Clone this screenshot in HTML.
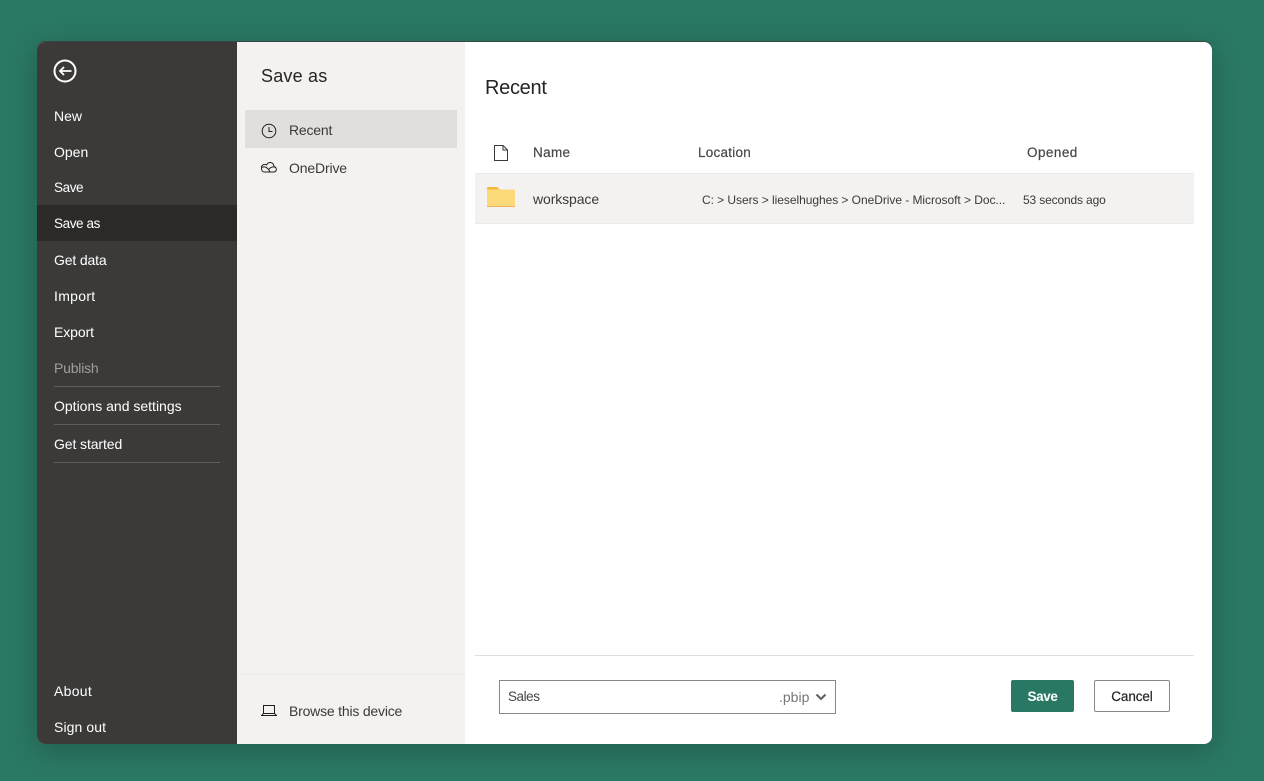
<!DOCTYPE html>
<html><head><meta charset="utf-8">
<style>
html,body{margin:0;padding:0;width:1264px;height:781px;overflow:hidden;background:#2a7964;font-family:"Liberation Sans",sans-serif;}
#d{position:absolute;left:37px;top:42px;width:1175px;height:702px;border-radius:8px;overflow:hidden;background:#fff;box-shadow:0 6px 30px rgba(0,0,0,.24),0 -1px 0 #3f4a48;}
.a{position:absolute;white-space:nowrap;line-height:20px;}
.m{left:54px;color:#fff;font-size:14px;}
.h{font-size:13px;color:#484644;-webkit-text-stroke:.2px #484644;}
.r{position:absolute;}
</style></head><body>
<div id="d"></div>
<div class="r" style="left:37px;top:42px;width:200px;height:702px;background:#3b3a39;border-radius:8px 0 0 8px"></div>
<div class="r" style="left:237px;top:42px;width:228px;height:702px;background:#f3f2f1"></div>
<div class="r" style="left:37px;top:205px;width:200px;height:36px;background:#2b2a29"></div>
<svg class="r" style="left:53px;top:59px" width="24" height="24" viewBox="0 0 24 24" fill="none" stroke="#fff"><circle cx="12" cy="12" r="10.500" stroke-width="2"/><path d="M18.500 12H7M11 8 7 12l4 4" stroke-width="1.800"/></svg>
<div class="a m" style="top:106px">New</div>
<div class="a m" style="top:142px">Open</div>
<div class="a m" style="top:178px;font-size:13.500px;letter-spacing:-.4px">Save</div>
<div class="a m" style="top:214px;font-size:13.500px;letter-spacing:-.4px">Save as</div>
<div class="a m" style="top:250px;letter-spacing:-.15px">Get data</div>
<div class="a m" style="top:286px;letter-spacing:.3px">Import</div>
<div class="a m" style="top:322px;letter-spacing:-.08px">Export</div>
<div class="a m" style="top:358px;color:#a19f9d;letter-spacing:-.2px">Publish</div>
<div class="r" style="left:54px;top:386px;width:166px;height:1px;background:#605e5c"></div>
<div class="a m" style="top:396px">Options and settings</div>
<div class="r" style="left:54px;top:424px;width:166px;height:1px;background:#605e5c"></div>
<div class="a m" style="top:434px;letter-spacing:-.1px">Get started</div>
<div class="r" style="left:54px;top:462px;width:166px;height:1px;background:#605e5c"></div>
<div class="a m" style="top:681px;letter-spacing:.3px">About</div>
<div class="a m" style="top:717px;letter-spacing:.1px">Sign out</div>

<div class="a" style="left:261px;top:66px;font-size:18px;color:#252423;letter-spacing:.2px">Save as</div>
<div class="r" style="left:245px;top:110px;width:212px;height:38px;background:#e1dfdd"></div>
<svg class="r" style="left:261px;top:123px" width="16" height="16" viewBox="0 0 16 16" fill="none" stroke="#201f1e"><circle cx="8" cy="8" r="6.800"/><path d="M8 4v4.500h3.500"/></svg>
<div class="a" style="left:289px;top:120px;font-size:14px;color:#3b3a39;letter-spacing:-.2px">Recent</div>
<svg class="r" style="left:261px;top:160px" width="16" height="14" viewBox="0 0 16 14" fill="none" stroke="#201f1e"><path d="M3 12H13a2.500 2.500 0 0 0 2.300-2.700A2.500 2.500 0 0 0 13 6.800 4 4 0 0 0 9.500 2.500 4 4 0 0 0 5.600 5 3.300 3.300 0 0 0 .6 8.800 3 3 0 0 0 3 12Z"/><path d="M1 7.500c3.500-2 6 .8 8 4.300M8 9c2-2 4.500-2.700 7-1.500"/></svg>
<div class="a" style="left:289px;top:158px;font-size:14px;color:#3b3a39;letter-spacing:-.15px">OneDrive</div>
<div class="r" style="left:237px;top:674px;width:228px;height:1px;background:#edebe9"></div>
<svg class="r" style="left:261px;top:704px" width="16" height="13" viewBox="0 0 16 13" fill="none" stroke="#201f1e"><path d="M2.500 9.500V1.500h11v8M.5 11.500h15l-2-2h-11z"/></svg>
<div class="a" style="left:289px;top:701px;font-size:14px;color:#3b3a39;letter-spacing:-.2px">Browse this device</div>

<div class="a" style="left:485px;top:78px;font-size:20px;color:#252423;letter-spacing:-.3px">Recent</div>
<svg class="r" style="left:493px;top:144px" width="16" height="18" viewBox="0 0 16 18" fill="none" stroke="#3b3a39"><path d="M1.500 1.500h8.500l4.500 4.500V16.500h-13zM10 1.500v4.500h4.500"/></svg>
<div class="a h" style="left:533px;top:143px;font-size:13.500px;letter-spacing:.35px">Name</div>
<div class="a h" style="left:698px;top:143px;font-size:13.500px;letter-spacing:.25px">Location</div>
<div class="a h" style="left:1027px;top:143px;font-size:13.500px;letter-spacing:.45px">Opened</div>
<div class="r" style="left:475px;top:173px;width:719px;height:51px;background:#f3f2f1;border-top:1px solid #edebe9;border-bottom:1px solid #edebe9;box-sizing:border-box"></div>
<svg class="r" style="left:487px;top:186px" width="28" height="22" viewBox="0 0 28 22"><path d="M0 2a1 1 0 0 1 1-1h8.500a2 2 0 0 1 1.400.6L13 4H0z" fill="#f5b93f"/><path d="M0 3.500h27a1 1 0 0 1 1 1V20a1 1 0 0 1-1 1H1a1 1 0 0 1-1-1z" fill="#fcd97a"/><rect y="20" width="28" height="1" rx=".5" fill="#f3b45a"/></svg>
<div class="a" style="left:533px;top:189px;font-size:14px;color:#3b3a39;letter-spacing:-.1px">workspace</div>
<div class="a" style="left:702px;top:190px;font-size:12px;color:#3b3a39;letter-spacing:-.05px">C: &gt; Users &gt; lieselhughes &gt; OneDrive - Microsoft &gt; Doc...</div>
<div class="a" style="left:1023px;top:190px;font-size:12px;color:#3b3a39;letter-spacing:-.15px">53 seconds ago</div>

<div class="r" style="left:475px;top:655px;width:719px;height:1px;background:#e1dfdd"></div>
<div class="r" style="left:499px;top:680px;width:337px;height:34px;box-sizing:border-box;border:1px solid #8a8886;background:#fff"></div>
<div class="a" style="left:508px;top:687px;font-size:13.500px;color:#484644;letter-spacing:-.45px">Sales</div>
<div class="a" style="left:779px;top:687px;font-size:14px;color:#797775">.pbip</div>
<svg class="r" style="left:815px;top:693px" width="12" height="8" viewBox="0 0 12 8" fill="none" stroke="#605e5c" stroke-width="2"><path d="M1.500 1.500 6 6 10.500 1.500"/></svg>
<div class="a" style="left:1011px;top:680px;width:63px;height:32px;line-height:34px;background:#297864;border-radius:2px;color:#fff;font-size:13.500px;font-weight:bold;text-align:center;letter-spacing:-.4px">Save</div>
<div class="a" style="left:1094px;top:680px;width:76px;height:32px;box-sizing:border-box;border:1px solid #8a8886;line-height:32px;background:#fff;border-radius:2px;color:#252423;font-size:13.500px;text-align:center;letter-spacing:-.1px;-webkit-text-stroke:.2px #252423">Cancel</div>
</body></html>
